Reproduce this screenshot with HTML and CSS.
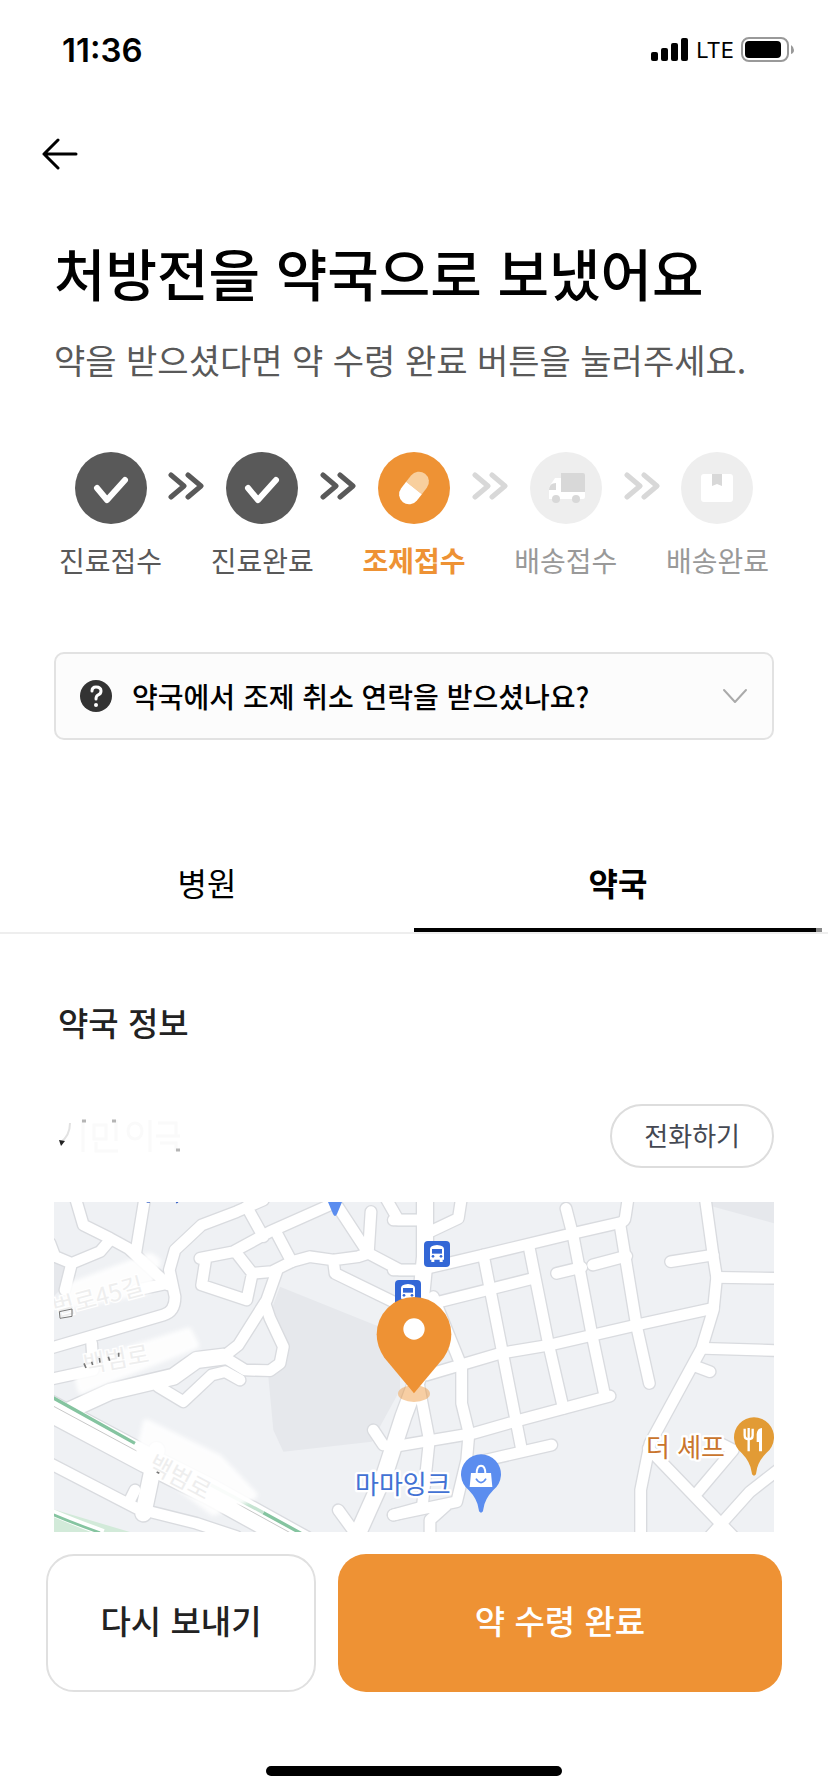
FILE: index.html
```html
<!DOCTYPE html>
<html lang="ko">
<head>
  <meta charset="UTF-8">
  <meta name="viewport" content="width=device-width, initial-scale=1">
  <title>처방전을 약국으로 보냈어요</title>
  <link rel="stylesheet" href="styles.css">
</head>
<body>

<div class="status-bar">
  <span class="time">11:36</span>
  <div class="status-icons">
    <svg width="38" height="24" viewBox="0 0 38 24">
      <rect x="0" y="14" width="7" height="9" rx="2"/>
      <rect x="10" y="10" width="7" height="13" rx="2"/>
      <rect x="20" y="5" width="7" height="18" rx="2"/>
      <rect x="30" y="0" width="7" height="23" rx="2"/>
    </svg>
    <span class="network">LTE</span>
    <svg width="53" height="26" viewBox="0 0 53 26">
      <rect x="1" y="1" width="46" height="23" rx="7" fill="none" stroke="#999" stroke-width="2"/>
      <rect x="4" y="4" width="36" height="17" rx="4"/>
      <path d="M50 8q3 2 3 5t-3 4z" fill="#999"/>
    </svg>
  </div>
</div>

<header class="top-bar">
  <button class="back" aria-label="뒤로">
    <svg width="36" height="32" viewBox="0 0 36 32" fill="none" stroke="#000" stroke-width="3" stroke-linecap="round" stroke-linejoin="round">
      <path d="M16 2L2 16l14 14M2 16h32"/>
    </svg>
  </button>
</header>

<main>
  <section class="intro">
    <h1>처방전을 약국으로 보냈어요</h1>
    <p>약을 받으셨다면 약 수령 완료 버튼을 눌러주세요.</p>
  </section>

  <div class="steps">
    <div class="step done">
      <svg class="step-icon" viewBox="0 0 72 72">
        <circle cx="36" cy="36" r="36" fill="#595959"/>
        <path d="M22 36l10 12 18-20" fill="none" stroke="#fff" stroke-width="6" stroke-linecap="round" stroke-linejoin="round"/>
      </svg>
      <span>진료접수</span>
    </div>
    <svg class="arrows done" viewBox="0 0 36 28"><path d="M3 3l13 11L3 25M20 3l13 11-13 11"/></svg>
    <div class="step done">
      <svg class="step-icon" viewBox="0 0 72 72">
        <circle cx="36" cy="36" r="36" fill="#595959"/>
        <path d="M22 36l10 12 18-20" fill="none" stroke="#fff" stroke-width="6" stroke-linecap="round" stroke-linejoin="round"/>
      </svg>
      <span>진료완료</span>
    </div>
    <svg class="arrows done" viewBox="0 0 36 28"><path d="M3 3l13 11L3 25M20 3l13 11-13 11"/></svg>
    <div class="step current">
      <svg class="step-icon" viewBox="0 0 72 72">
        <circle cx="36" cy="36" r="36" fill="#ee9234"/>
        <g transform="rotate(38 36 36)">
          <path d="M26 36v-8a10 10 0 0 1 20 0v8z" fill="#f8cf9e"/>
          <path d="M26 36v8a10 10 0 0 0 20 0v-8z" fill="#fff"/>
        </g>
      </svg>
      <span>조제접수</span>
    </div>
    <svg class="arrows" viewBox="0 0 36 28"><path d="M3 3l13 11L3 25M20 3l13 11-13 11"/></svg>
    <div class="step">
      <svg class="step-icon" viewBox="0 0 72 72">
        <circle cx="36" cy="36" r="36" fill="#eee"/>
        <path d="M19 47V35l6-9h7v14h23v5q0 2-2 2z" fill="#fff"/>
        <path d="M31 21h22q2 0 2 2v17H31z" fill="#d8d8d8"/>
        <path d="M19 38q0-7 7-7v7z" fill="#d8d8d8"/>
        <circle cx="26" cy="47" r="4" fill="#d8d8d8"/>
        <circle cx="46" cy="47" r="4" fill="#d8d8d8"/>
      </svg>
      <span>배송접수</span>
    </div>
    <svg class="arrows" viewBox="0 0 36 28"><path d="M3 3l13 11L3 25M20 3l13 11-13 11"/></svg>
    <div class="step">
      <svg class="step-icon" viewBox="0 0 72 72">
        <circle cx="36" cy="36" r="36" fill="#eee"/>
        <rect x="20" y="22" width="32" height="28" rx="3" fill="#fff"/>
        <path d="M31 22h10v12l-5-2-5 2z" fill="#d8d8d8"/>
      </svg>
      <span>배송완료</span>
    </div>
  </div>

  <button class="question">
    <svg width="32" height="32" viewBox="0 0 32 32">
      <circle cx="16" cy="16" r="16" fill="#333"/>
      <path d="M12 11q0-4 4-4 5 0 5 4 0 3-3 4-2 1-2 4" fill="none" stroke="#fff" stroke-width="3" stroke-linecap="round"/>
      <circle cx="16" cy="25" r="2" fill="#fff"/>
    </svg>
    <span>약국에서 조제 취소 연락을 받으셨나요?</span>
    <svg width="26" height="16" viewBox="0 0 26 16" fill="none" stroke="#aaa" stroke-width="2" stroke-linecap="round" stroke-linejoin="round">
      <path d="M2 2l11 12L24 2"/>
    </svg>
  </button>

  <nav class="tabs">
    <button class="tab">병원</button>
    <button class="tab active">약국</button>
  </nav>

  <section class="pharmacy">
    <h2>약국 정보</h2>
    <div class="pharmacy-row">
      <!-- masked pharmacy name -->
      <svg width="124" height="36" viewBox="0 0 124 36" fill="none" stroke="#fafafa" stroke-width="3">
        <path d="M25 2v32M36 7h12v14H36zM58 2v21M38 24v9h22M70 13a7 8 0 1 0 14 0a7 8 0 1 0-14 0M92 2v32M100 5h18v12M98 18h24M102 25h16v8"/>
        <path d="M12 5Q12 18 2 25" stroke="#e2e2e2" stroke-width="2"/>
        <path d="M1 22l6 1-4 5z" fill="#222" stroke="none"/>
        <path d="M24 3h4M54 3h4M118 32h4" stroke="#b5b5b5"/>
      </svg>
      <button class="call">전화하기</button>
    </div>

    <svg class="map" viewBox="0 0 2160 990" role="img" aria-label="약국 위치 지도">
      <defs>
        <g id="roads-left">
          <path d="M75 20L100 105 180 145 235 175 355 285"/>
          <path d="M285 20L258 185M5 195L65 220 150 185 180 150M65 220L45 300M0 160L15 200"/>
          <path d="M640 30L560 65 455 105 375 180 358 240 375 320Q375 365 340 375L0 475"/>
          <path d="M260 300L355 280M125 460L130 540M0 568L130 540"/>
          <path d="M590 50L640 140M680 130L725 215M840 45L660 125 550 185 450 205 467 210 455 285 590 330 607 250 560 190"/>
          <path d="M607 250L665 245 725 215 780 200 850 210 925 200 955 190 860 45M963 65L955 190 1050 240H1120M850 210L855 250 1050 345"/>
          <path d="M1005 20L1045 90H1120M680 245L650 330 565 465 520 500"/>
          <path d="M645 340L660 385 700 470 690 520 660 542 585 540 520 500"/>
          <path d="M325 590L400 635 485 555 525 545 570 570"/>
          <path d="M0 820L260 955 440 1000 560 1040M235 940L255 900"/>
          <path d="M865 960L905 1015M970 720L1000 765M1030 975L1120 950"/>
        </g>
        <g id="roads-wide">
          <path d="M60 660L180 605 370 560 440 510 520 500"/>
          <path d="M320 780L280 970"/>
          <path d="M1105 560L1060 680 1005 850 915 1050"/>
        </g>
        <g id="roads-right">
          <path d="M-20 90H60M-20 240H60M185 20L175 85 80 130"/>
          <path d="M80 235L250 195 520 130 660 98Q675 95 676 80L685 20"/>
          <path d="M498 55L520 140 575 430 615 620M660 105L710 410 748 580"/>
          <path d="M470 250L545 232M578 225L680 198M100 340L400 265"/>
          <path d="M250 195L310 500 365 780M387 170L445 460 490 655"/>
          <path d="M80 555L300 490 450 465 710 405 940 355"/>
          <path d="M-20 770L220 730 360 690 630 618"/>
          <path d="M250 812L455 765M55 580L88 750 68 940"/>
          <path d="M100 320L185 530V640L207 730 200 810 170 935 -20 975M90 1040V990L140 945"/>
          <path d="M915 20L940 200 950 262 940 360 905 475 750 760 722 900V1050"/>
          <path d="M812 215L940 195M950 262L1140 265M915 475L1140 482M890 530L930 545"/>
          <path d="M745 775L1010 1050M890 910L1000 780 960 760M1140 835L1050 905 920 1050"/>
        </g>
      </defs>

      <rect width="2160" height="990" fill="#eff1f4"/>
      <g transform="translate(-12 -36)">
        <path d="M690 290L975 405 1050 430V600L965 755 700 785 670 720 655 560 712 510 715 460 660 370z" fill="#e6e8ec"/>
        <path d="M1990 50L2180 102V30H1980z" fill="#e6e8ec"/>
        <path d="M10 200l50 20-20 70-30 30z" fill="#e6e8ec"/>
        <path d="M0 955L270 1035H0z" fill="#d2ead9"/>

        <g class="road-edge">
          <use href="#roads-left"/>
          <use href="#roads-right" x="1050"/>
        </g>
        <g class="road-edge wide">
          <use href="#roads-wide"/>
          <path d="M1125 20V200L1090 560"/>
        </g>
        <path class="road-edge avenue" d="M-20 645L290 810 480 905 760 1060"/>
        <g class="road">
          <use href="#roads-left"/>
          <use href="#roads-right" x="1050"/>
        </g>
        <g class="road wide">
          <use href="#roads-wide"/>
          <path d="M1125 20V200L1090 560"/>
        </g>
        <path class="road avenue" d="M-20 645L290 810 480 905 760 1060"/>

        <path d="M0 618L255 760M640 968L760 1034" stroke="#85c4a0" stroke-width="10"/>
        <path d="M465 875L640 968" stroke="#c5e3d1" stroke-width="10"/>
        <path d="M0 643L260 783M560 940L720 1028" stroke="#aaa" stroke-width="2"/>
        <path d="M0 965Q70 995 160 1028" fill="none" stroke="#fff" stroke-width="22"/>
        <path d="M0 970Q70 1000 150 1028" fill="none" stroke="#85c4a0" stroke-width="8"/>

        <!-- masked street names -->
        <g class="smudge">
          <path d="M60 290L300 200 320 215 290 300 30 350z"/>
          <path d="M85 560L135 515 415 425 435 465 95 600z"/>
          <path d="M290 700L505 805 610 915 590 925 490 965 405 900 270 790z"/>
        </g>
        <g class="street">
          <text x="16" y="382" transform="rotate(-15 16 382)">범로45길</text>
          <text x="105" y="550" transform="rotate(-10 105 550)">백범로</text>
          <text x="290" y="838" transform="rotate(28 290 838)">백범로</text>
        </g>
        <path d="M28 365l38-8v22l-36 6z" fill="none" stroke="#777" stroke-width="3"/>
        <path d="M102 520l6 14M125 515l3 10M148 504l2 14M175 500l4 12M206 488v12M320 846l8 4" stroke="#777" stroke-width="5"/>
        <path d="M290 36h10M378 38l6-2" stroke="#3f68c8" stroke-width="5"/>

        <path d="M834 36h42l-15 36q-6 12-12 0z" fill="#5b8def"/>

        <g id="bus" transform="translate(1122 153)">
          <rect width="78" height="78" rx="12" fill="#3367d6"/>
          <path d="M18 24q0-10 21-12 21 2 21 12v32h-4v7h-9v-7H31v7h-9v-7h-4z" fill="#fff"/>
          <path d="M24 24h30v14H24z" fill="#3367d6"/>
          <circle cx="27" cy="46" r="4" fill="#3367d6"/>
          <circle cx="51" cy="46" r="4" fill="#3367d6"/>
        </g>
        <use href="#bus" x="-87" y="117"/>

        <!-- shop -->
        <path d="M1293 968q-6 0-7-10-3-30-30-58a60 60 0 1 1 74 0q-27 28-30 58-1 10-7 10z" fill="#5b8def"/>
        <path d="M1263 849h60l4 42h-68z" fill="#fff"/>
        <path d="M1280 851q0-24 13-24t13 24" fill="none" stroke="#fff" stroke-width="6"/>
        <path d="M1278 866q15 24 30 0" fill="none" stroke="#5b8def" stroke-width="5"/>
        <text class="place shop" x="915" y="912">마마잉크</text>

        <!-- restaurant -->
        <path d="M2112 857q-6 0-7-10-3-30-30-58a60 60 0 1 1 74 0q-27 28-30 58-1 10-7 10z" fill="#e29b35"/>
        <path d="M2084 716v20q0 12 12 12t12-12v-20M2096 714v70" fill="none" stroke="#fff" stroke-width="7"/>
        <path d="M2136 784h-9v-28h-7v-24q2-18 16-18z" fill="#fff"/>
        <text class="place food" x="1788" y="802">더 셰프</text>

        <!-- pharmacy pin -->
        <ellipse cx="1092" cy="611" rx="48" ry="25" fill="#ee9234" opacity=".45"/>
        <path d="M1092 610L1003 503Q980 470 980 433a112 112 0 0 1 224 0q0 37-23 70z" fill="#ee9234"/>
        <circle cx="1092" cy="417" r="32" fill="#fff"/>
      </g>
    </svg>
  </section>
</main>

<footer class="actions">
  <button class="resend">다시 보내기</button>
  <button class="complete">약 수령 완료</button>
</footer>
<div class="home-indicator"></div>

</body>
</html>
```

FILE: styles.css
```css
* {
  box-sizing: border-box;
}

body {
  margin: 0;
  background: #fff;
  color: #000;
  font-family: "Noto Sans CJK KR", sans-serif;
}

button {
  font-family: inherit;
  color: inherit;
  background: none;
  border: none;
  padding: 0;
  cursor: pointer;
}

h1, h2, p {
  margin: 0;
}

svg {
  display: block;
  flex-shrink: 0;
}

.status-bar {
  display: flex;
  justify-content: space-between;
  align-items: center;
  height: 100px;
  padding: 0 34px 0 62px;
  font-family: Inter, sans-serif;
}

.time {
  font-size: 33px;
  font-weight: 600;
}

.status-icons {
  display: flex;
  align-items: center;
  gap: 7px;
}

.network {
  font-size: 22px;
}

.top-bar {
  display: flex;
  align-items: center;
  height: 108px;
  padding: 0 42px;
}

.intro {
  padding: 28px 54px 0;
}

.intro h1 {
  font-size: 56px;
  line-height: 72px;
  font-weight: 500;
}

.intro p {
  margin-top: 28px;
  font-size: 34px;
  line-height: 48px;
  color: #595959;
}

.steps {
  display: flex;
  justify-content: space-between;
  padding: 68px 59px 0;
}

.step {
  display: flex;
  flex-direction: column;
  align-items: center;
  gap: 16px;
  font-size: 28px;
  line-height: 40px;
  color: #999;
}

.step.done {
  color: #595959;
}

.step.current {
  color: #ee9234;
  font-weight: 700;
}

.step-icon {
  width: 72px;
  height: 72px;
}

.arrows {
  width: 36px;
  height: 28px;
  margin-top: 20px;
  fill: none;
  stroke: #d8d8d8;
  stroke-width: 5;
  stroke-linecap: round;
  stroke-linejoin: round;
}

.arrows.done {
  stroke: #595959;
}

.question {
  display: flex;
  align-items: center;
  gap: 20px;
  width: calc(100% - 108px);
  height: 88px;
  margin: 72px 54px 0;
  padding: 0 24px;
  border: 2px solid #e2e2e2;
  border-radius: 10px;
  background: #fcfcfc;
  font-size: 28px;
  font-weight: 500;
}

.question span {
  flex: 1;
  text-align: left;
}

.tabs {
  display: grid;
  grid-template-columns: 1fr calc(50% - 3px);
  margin-top: 92px;
  padding-right: 6px;
  border-bottom: 2px solid #eee;
}

.tab {
  padding: 26px 0;
  font-size: 32px;
  line-height: 48px;
}

.tab.active {
  font-weight: 700;
  background: linear-gradient(to left, #888 6px, #000 6px) bottom / 100% 4px no-repeat;
}

.pharmacy {
  padding: 64px 54px 0;
}

.pharmacy h2 {
  padding-left: 4px;
  font-size: 33px;
  line-height: 48px;
  font-weight: 500;
  color: #222;
}

.pharmacy-row {
  display: flex;
  justify-content: space-between;
  align-items: center;
  margin-top: 58px;
  padding-left: 4px;
}

.call {
  height: 64px;
  padding: 0 32px 4px;
  border: 2px solid #ddd;
  border-radius: 32px;
  font-size: 26px;
  color: #444852;
}

.map {
  width: 100%;
  margin-top: 34px;
}

.road,
.road-edge {
  fill: none;
  stroke: #fff;
  stroke-width: 32;
  stroke-linecap: round;
  stroke-linejoin: round;
}

.road-edge {
  stroke: #d9dbdf;
  stroke-width: 40;
}

.road.wide {
  stroke-width: 48;
}

.road-edge.wide {
  stroke-width: 56;
}

.road.avenue {
  stroke-width: 76;
}

.road-edge.avenue {
  stroke-width: 84;
}

.smudge {
  fill: #fff;
  stroke: #fff;
  stroke-width: 24;
  stroke-linejoin: round;
  opacity: .9;
  filter: blur(6px);
}

.street {
  font-size: 72px;
  fill: #eee;
  stroke: #fff;
  stroke-width: 8;
  paint-order: stroke;
}

.place {
  font-size: 78px;
  stroke: #fff;
  stroke-width: 14;
  stroke-linejoin: round;
  paint-order: stroke;
}

.shop {
  fill: #4272d4;
}

.food {
  fill: #c9752d;
}

.actions {
  display: grid;
  grid-template-columns: 270fr 444fr;
  gap: 22px;
  padding: 22px 46px 0;
}

.actions button {
  height: 138px;
  padding-bottom: 6px;
  border-radius: 28px;
  font-size: 33px;
  font-weight: 500;
}

.actions .resend {
  border: 2px solid #e0e0e0;
  color: #222;
}

.actions .complete {
  background: #ee9234;
  color: #fff;
}

.home-indicator {
  width: 296px;
  height: 10px;
  margin: 74px auto 16px;
  border-radius: 5px;
  background: #000;
}
```
